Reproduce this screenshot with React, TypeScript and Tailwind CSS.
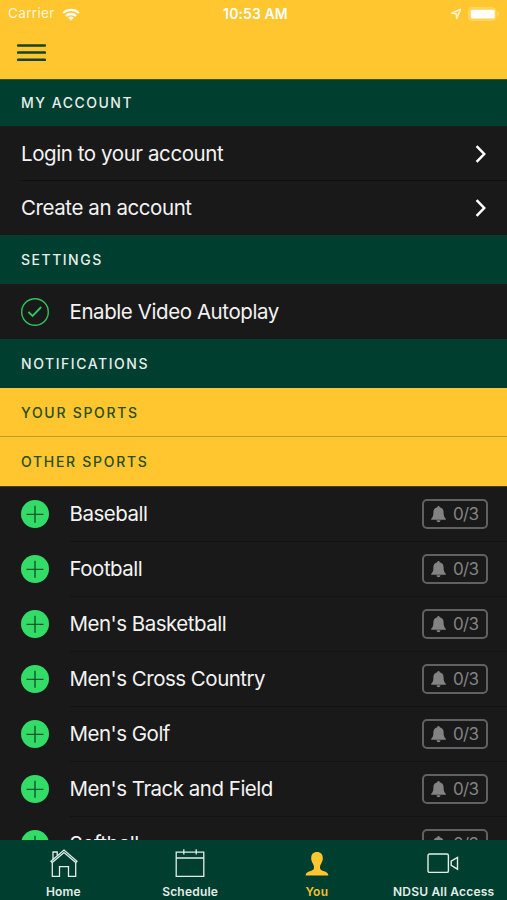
import React from "react";

const sports = [
  "Baseball",
  "Football",
  "Men's Basketball",
  "Men's Cross Country",
  "Men's Golf",
  "Men's Track and Field",
  "Softball",
];

function StatusBar() {
  return (
    <div className="grid h-[28px] grid-cols-3 items-center pl-[8px] pr-[7px] text-[13.5px] leading-none text-white">
      <div className="flex items-center gap-[7px]">
        <span className="tracking-[0.35px] text-[#fff6da]">Carrier</span>
        <svg width="18" height="13" viewBox="0 0 18 13" fill="none" stroke="#fff" strokeWidth="2.3">
          <path d="M1.2 5A11.2 11.2 0 0 1 16.8 5" />
          <path d="M4 8A7.2 7.2 0 0 1 14 8" />
          <path d="M9 12.6L6.2 9.8A4.2 4.2 0 0 1 11.8 9.8Z" fill="#fff" stroke="none" />
        </svg>
      </div>
      <span className="pl-[5px] text-center text-[14px] font-semibold tracking-[0.1px]"><span className="mr-[2px]">10:53 AM</span></span>
      <div className="flex items-center justify-end gap-[6px]">
        <svg width="12" height="12" viewBox="0 0 12 12" fill="none" stroke="#fff3cf" strokeWidth="1.6" strokeLinejoin="round">
          <path d="M10.6 1.2L1.6 5.3L6.2 5.8L6.7 10.4Z" />
        </svg>
        <svg width="32" height="14" viewBox="0 0 32 14">
          <rect x="0.5" y="0.5" width="27.5" height="13" rx="3.8" fill="#ffd152" stroke="#ffd768" />
          <rect x="2.7" y="2.7" width="24" height="8.8" rx="1.5" fill="#fff" />
          <path d="M29.6 4.6C31.3 5.2 31.3 8.8 29.6 9.4Z" fill="#ffdd80" />
        </svg>
      </div>
    </div>
  );
}

function Chevron() {
  return (
    <svg width="12" height="18" viewBox="0 0 12 18" fill="none" stroke="#fff" strokeWidth="2.5">
      <path d="M1.6 1.2L9.2 9L1.6 16.8" />
    </svg>
  );
}

function Plus() {
  return (
    <svg width="28" height="28" viewBox="0 0 28 28" className="-mt-px shrink-0">
      <circle cx="14" cy="14" r="14" fill="#33dc66" />
      <path d="M5.5 14.4H22.5M14 5.7V22.7" stroke="#14562c" strokeWidth="1.4" />
    </svg>
  );
}

function BellBadge() {
  return (
    <div className="flex h-[30px] w-[66px] items-center rounded-[5px] border-2 border-[#616161] pl-[7px] text-[#838383]">
      <svg width="15" height="17" viewBox="0 0 15 17" fill="currentColor">
        <path d="M6.3 1.2A1.2 1.2 0 0 1 8.7 1.2C11.4 1.8 12.6 3.8 12.6 6.3C12.6 9.6 13 11 14.8 12.8V13.8H.2V12.8C2 11 2.4 9.6 2.4 6.3C2.4 3.8 3.6 1.8 6.3 1.2Z" />
        <path d="M5.5 14.3H9.5A2 2 0 0 1 5.5 14.3Z" />
      </svg>
      <span className="ml-[7px] text-[17px] leading-none tracking-[-0.65px]">0/3</span>
    </div>
  );
}

function Tab({ label, active, children }: { label: string; active?: boolean; children: React.ReactNode }) {
  return (
    <div className={`flex w-1/4 flex-col items-center ${active ? "text-[#f2c230]" : "text-[#e3eee9]"}`}>
      <div className="flex h-[38px] items-end justify-center">{children}</div>
      <span className="mt-[6px] text-[12px] font-semibold leading-[15px] tracking-[0.2px] whitespace-nowrap">{label}</span>
    </div>
  );
}

export default function App() {
  return (
    <div className="flex h-[900px] w-[507px] flex-col overflow-hidden bg-[#191919] font-['Inter',sans-serif] text-[#f3f3f3]">
      <header className="h-[79px] shrink-0 bg-[#ffc62f]">
        <StatusBar />
        <svg width="29" height="19" viewBox="0 0 29 19" className="ml-[17px] mt-[15px]" stroke="#154326" strokeWidth="2.5" strokeLinecap="round">
          <path d="M1 2.5H28M1 9.6H28M1 16.8H28" />
        </svg>
      </header>

      <main className="min-h-0 flex-1 overflow-hidden">
        <h2 className="flex h-[47px] items-center border-t border-[#3c541f] bg-[#003e2f] pb-[2px] pl-[21px] text-[14px] font-medium tracking-[1.5px] text-[#e6efec]">
          MY ACCOUNT
        </h2>
        <div className="flex h-[54px] items-center justify-between pl-[21px] pr-[20px] pt-px text-[20.5px] tracking-[-0.42px]">
          <span className="pt-px">Login to your account</span>
          <Chevron />
        </div>
        <div className="ml-[21px] flex h-[55px] items-center justify-between border-t border-[#111111] pr-[20px] text-[20.5px] tracking-[-0.42px]">
          Create an account
          <Chevron />
        </div>
        <h2 className="flex h-[49px] items-center bg-[#003e2f] pl-[21px] text-[14px] font-medium tracking-[1.5px] text-[#e6efec]">
          SETTINGS
        </h2>
        <div className="flex h-[55px] items-center pl-[21px] text-[20.5px] tracking-[-0.42px]">
          <svg width="28" height="28" viewBox="0 0 28 28" fill="none" stroke="#2fc45d">
            <circle cx="14" cy="14" r="13.3" strokeWidth="1.4" />
            <path d="M7.4 14L11.6 18L20.2 9" strokeWidth="1.9" />
          </svg>
          <span className="ml-[20.5px] pt-px">Enable Video Autoplay</span>
        </div>
        <h2 className="flex h-[49px] items-center bg-[#003e2f] pl-[21px] text-[14px] font-medium tracking-[1.55px] text-[#e6efec]">
          NOTIFICATIONS
        </h2>
        <h3 className="flex h-[49px] items-center border-b-[1.5px] border-[#c49a29] bg-[#ffc62f] pl-[21px] text-[14px] font-medium tracking-[1.7px] text-[#284d20]">
          YOUR SPORTS
        </h3>
        <h3 className="flex h-[50px] items-center border-b border-[#4a3d1c] bg-[#ffc62f] pl-[21px] text-[14px] font-medium tracking-[1.7px] text-[#284d20]">
          OTHER SPORTS
        </h3>
        <ul>
          {sports.map((sport) => (
            <li key={sport} className="flex h-[55px] items-center pl-[21px]">
              <Plus />
              <div className="ml-[20.5px] flex h-full flex-1 items-center justify-between border-b border-[#121212] pr-[19px]">
                <span className="text-[20.5px] tracking-[-0.5px]">{sport}</span>
                <BellBadge />
              </div>
            </li>
          ))}
        </ul>
      </main>

      <nav className="flex h-[60px] shrink-0 bg-[#003e2f]">
        <Tab label="Home">
          <svg width="28" height="29" viewBox="0 0 28 29" fill="none" stroke="currentColor" strokeWidth="1.3" className="ml-[2px]">
            <path d="M2.3 14V27.4H9.5V17.6H18.5V27.4H25.7V14" />
            <path d="M1 12.2L14 1L27 12.2L25.8 13.6L14 3.6L2.2 13.6Z" />
            <path d="M3 10.4V3H7.2V6.6" />
          </svg>
        </Tab>
        <Tab label="Schedule">
          <svg width="30" height="29" viewBox="0 0 30 29" fill="none" stroke="currentColor" strokeWidth="1.3">
            <path d="M1.2 3.2H28.8V27.4H1.2ZM1.2 9H28.8M8.8 .3V5.6M21.2 .3V5.6" />
          </svg>
        </Tab>
        <Tab label="You" active>
          <svg width="24" height="26" viewBox="0 0 24 26" fill="#ffc62f">
            <path d="M12 0C15.7 0 17.8 2.2 17.8 6C17.8 8.4 17.2 9.8 16.2 11.6C15.2 13.4 15 14.4 15 16C15 19.8 23.2 18.4 23.4 23.4H.6C.8 18.4 9 19.8 9 16C9 14.4 8.8 13.4 7.8 11.6C6.8 9.8 6.2 8.4 6.2 6C6.2 2.2 8.3 0 12 0Z" />
          </svg>
        </Tab>
        <Tab label="NDSU All Access">
          <svg width="32" height="25" viewBox="0 0 32 25" fill="none" stroke="currentColor" strokeWidth="1.4" className="mr-px">
            <rect x="1" y="1" width="20.4" height="18.4" rx="1.5" />
            <path d="M24.2 8.2L30.5 4.4V16.2L24.2 12.4Z" />
          </svg>
        </Tab>
      </nav>
    </div>
  );
}
